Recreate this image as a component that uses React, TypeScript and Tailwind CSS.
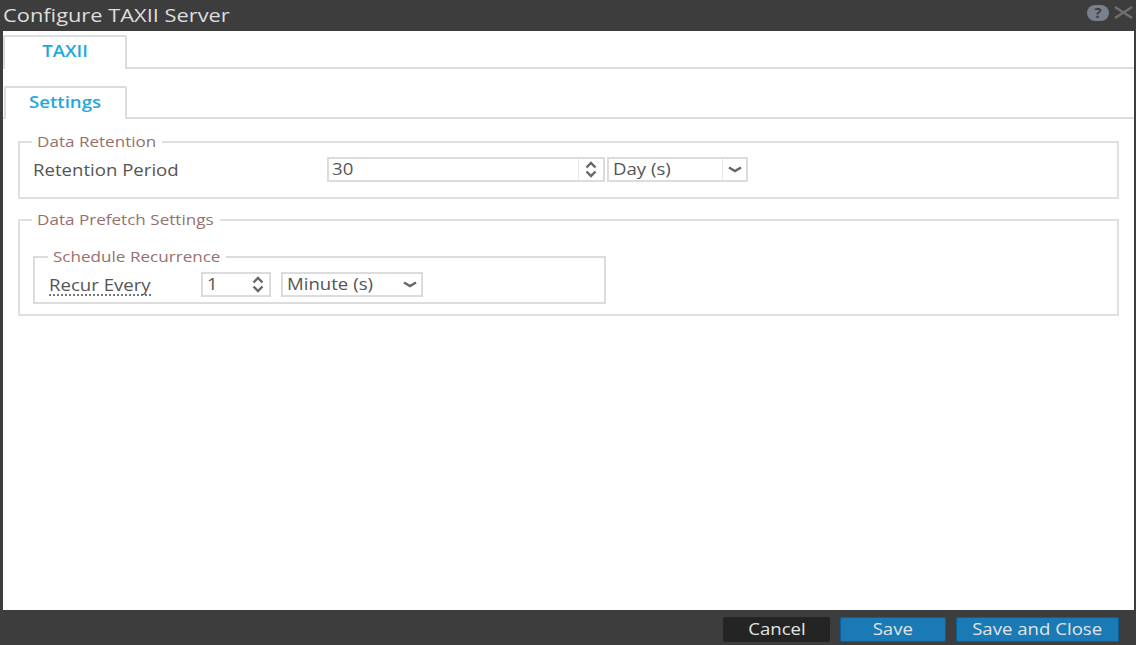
import React from "react";

const font = { fontFamily: '"Open Sans", sans-serif' };

function Wide({ children }: { children: React.ReactNode }) {
  return <span className="inline-block origin-left scale-x-[1.2] whitespace-nowrap">{children}</span>;
}

function WideCenter({ children }: { children: React.ReactNode }) {
  return <span className="inline-block origin-center scale-x-[1.2] whitespace-nowrap">{children}</span>;
}

function Updown() {
  return (
    <svg width="12" height="17" viewBox="0 0 12 17" fill="none" stroke="#666" strokeWidth="2.4">
      <path d="M1.500 6.500 L6 2 L10.500 6.500" />
      <path d="M1.500 10.500 L6 15 L10.500 10.500" />
    </svg>
  );
}

function Chevron() {
  return (
    <svg width="14" height="7" viewBox="0 0 14 7" fill="none" stroke="#666" strokeWidth="2.4">
      <path d="M1 1.500 L7 5 L13 1.500" />
    </svg>
  );
}

function Legend({ children, className }: { children: React.ReactNode; className: string }) {
  return (
    <legend className={`-ml-px box-content px-[5px] pb-[2px] text-[14px] leading-[16px] text-[#966f6f] ${className}`}>
      <span className="inline-block origin-left translate-y-[0.5px] scale-x-[1.22] whitespace-nowrap">{children}</span>
    </legend>
  );
}

export default function App() {
  return (
    <div className="flex h-[645px] w-[1136px] flex-col bg-[#3d3d3d] pl-[3px] pr-[2px]" style={font}>
      <header className="flex h-[31px] shrink-0 items-center justify-between pr-px">
        <h1 className="mb-[2px] text-[18.500px] font-normal leading-[22px] text-[#dedede]">
          <span className="inline-block origin-left scale-x-[1.18] whitespace-nowrap">Configure TAXII Server</span>
        </h1>
        <div className="mb-[6px] flex items-center gap-[5px]">
          <span className="flex h-[16px] w-[22px] items-center justify-center rounded-full bg-[#77808c] text-[15px] font-bold leading-none text-[#3d3d3d]">?</span>
          <svg width="19" height="13" viewBox="0 0 19 13" fill="none" stroke="#6f6f6f" strokeWidth="2.4">
            <path d="M1 1 L18 12 M18 1 L1 12" />
          </svg>
        </div>
      </header>

      <main className="flex min-h-0 flex-1 flex-col bg-white">
        <div className="flex h-[38px] items-end border-b-2 border-[#dcdcdc] pt-[4px]">
          <div className="-mb-[2px] flex h-[34px] w-[124px] items-center justify-center rounded-t-[2px] border-x-2 border-t-2 border-[#dcdcdc] bg-white pb-[2px] text-[15.500px] font-semibold text-[#1fa8dc]">
            <WideCenter>TAXII</WideCenter>
          </div>
        </div>
        <div className="mt-[17px] flex h-[33px] items-end border-b-2 border-[#dcdcdc]">
          <div className="-mb-[2px] ml-px flex h-[33px] w-[123px] items-center justify-center rounded-t-[2px] border-x-2 border-t-2 border-[#dcdcdc] bg-white pb-[2px] text-[15.500px] font-semibold text-[#1fa8dc]">
            <WideCenter>Settings</WideCenter>
          </div>
        </div>

        <div className="flex flex-col gap-[12px] px-[15px] pt-[14px]">
          <fieldset className="h-[66px] border-2 border-[#e0e0e0] pl-[13px]">
            <Legend className="w-[120px]">Data Retention</Legend>
            <div className="mt-[6px] flex items-center text-[15.500px] text-[#555]">
              <span className="w-[294px] leading-[24px]"><Wide>Retention Period</Wide></span>
              <div className="flex h-[25px] w-[278px] items-center border-2 border-[#dcdcdc]">
                <span className="flex-1 pl-[3px] pt-px"><Wide>30</Wide></span>
                <span className="flex h-full w-[25px] items-center justify-center border-l border-[#e8e8e8]"><Updown /></span>
              </div>
              <div className="ml-[2px] flex h-[25px] w-[141px] items-center border-2 border-[#dcdcdc]">
                <span className="flex-1 pl-[4px] pt-px"><Wide>Day (s)</Wide></span>
                <span className="flex h-full w-[24px] items-center justify-center border-l border-[#e8e8e8]"><Chevron /></span>
              </div>
            </div>
          </fieldset>

          <fieldset className="h-[105px] border-2 border-[#e0e0e0] pl-[13px]">
            <Legend className="w-[178px]">Data Prefetch Settings</Legend>
            <fieldset className="mt-[19px] h-[56px] w-[573px] border-2 border-[#dcdcdc] pl-[14px]">
              <Legend className="w-[168px]">Schedule Recurrence</Legend>
              <div className="mt-[6px] flex items-center text-[15.500px] text-[#555]">
                <span className="h-[22px] w-[102px] border-b-2 border-dotted border-[#777] leading-[22px]"><Wide>Recur Every</Wide></span>
                <div className="ml-[50px] flex h-[25px] w-[70px] items-center justify-between border-2 border-[#dcdcdc] pl-[4px] pr-[5px]">
                  <span className="pt-px"><Wide>1</Wide></span>
                  <Updown />
                </div>
                <div className="ml-[10px] flex h-[25px] w-[142px] items-center justify-between border-2 border-[#dcdcdc] pl-[4px] pr-[4px]">
                  <span className="pt-px"><Wide>Minute (s)</Wide></span>
                  <Chevron />
                </div>
              </div>
            </fieldset>
          </fieldset>
        </div>
      </main>

      <footer className="flex h-[35px] shrink-0 items-center justify-end gap-[10px] pr-[15px] pt-[3px] text-[15.500px] text-[#e4e4e4]">
        <button className="h-[25px] w-[107px] rounded-[2px] bg-[#242424]"><span className="block pt-px"><WideCenter>Cancel</WideCenter></span></button>
        <button className="h-[25px] w-[106px] rounded-[2px] border border-[#0f5f96] bg-[#197ab5]"><WideCenter>Save</WideCenter></button>
        <button className="h-[25px] w-[163px] rounded-[2px] border border-[#0f5f96] bg-[#197ab5]"><WideCenter>Save and Close</WideCenter></button>
      </footer>
    </div>
  );
}
